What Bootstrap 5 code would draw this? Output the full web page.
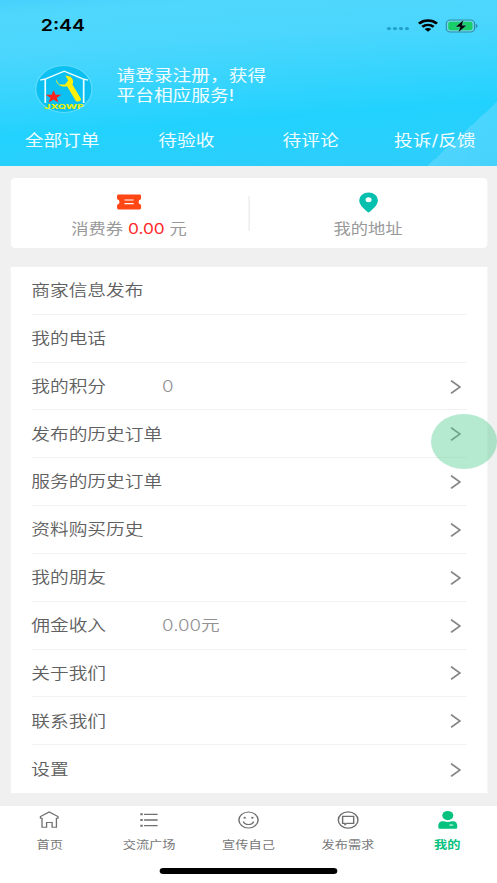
<!DOCTYPE html>
<html lang="zh-CN">
<head>
<meta charset="utf-8">
<meta name="viewport" content="width=device-width, initial-scale=1">
<title>我的</title>
<link href="https://cdn.jsdelivr.net/npm/bootstrap@5.3.0/dist/css/bootstrap.min.css" rel="stylesheet">
<style>
html,body{margin:0;overflow:hidden;background:#f0f0f0}
body{font-family:Inter,"Noto Sans CJK SC",sans-serif;color:#606060;width:497px;height:883px}
svg{display:block}
/* 414pt wide screen stretched to the window */
.screen{width:414px;height:883px;transform:scaleX(1.2005);transform-origin:0 0}
.hero{height:166px;color:#f0fcff;font-size:15.6px;
 background:linear-gradient(to bottom right,transparent 0 50%,rgba(120,220,255,.45) 50%,rgba(120,220,255,.3)) right bottom/58px 64px no-repeat,
 linear-gradient(175deg,#46d0fb 0%,#50d7fd 8%,#4cd6fd 26%,#37d4fd 48%,#22d2fe 68%,#30cdfb 100%)}
.status{height:51px;padding:0 16.5px 0 34px}
.clock{font-size:16.2px;font-weight:600;color:#000}
.wifi{margin:0 6px 0 7px}
.dots{margin-top:4px}
.profile{height:64px;padding:11px 0 0 28px}
.greet{line-height:20.5px;margin-left:18px;padding-bottom:5px}
.orders{height:52px}
.summary{margin:12px 8.5px 0;height:70px;border-radius:4px;color:#999;font-size:14.4px}
.bar-line{width:1px;height:35px;background:#e8e8e8}
.caption{margin:4px 0 -4px}
.red{color:#ff2a2a}
.menu{margin:19px 8.5px 0;padding:0 17px 0 17.5px;font-size:15.6px;font-weight:350}
.item{height:47.82px;border-bottom:1px solid #f2f2f2;padding-top:1px}
.item:last-child{border-bottom:0}
.item .name{width:109px}
.val{color:#929292;padding-top:1px}
.item svg{margin-right:5px}
.tabs{margin-top:13px;height:77px;font-size:11px;color:#777}
.tab-cell{padding-top:3px}
.tab-cell svg{height:22px;margin-bottom:6.5px}
.tab-cell.on{color:#07c17e;font-weight:600}
.homebar{left:133.3px;bottom:9px;width:147.5px;height:6px;border-radius:3px;background:#000}
.touch{left:358.6px;top:414px;width:55px;height:55px;border-radius:50%;background:rgba(84,206,148,.43)}
</style>
<script src="https://cdn.jsdelivr.net/npm/bootstrap@5.3.0/dist/js/bootstrap.bundle.min.js"></script>
</head>
<body>
<div class="screen position-relative">
 <header class="hero">
  <div class="status d-flex align-items-center justify-content-between">
   <span class="clock">2:44</span>
   <div class="d-flex align-items-center">
    <svg class="dots" width="19" height="6" fill="#229fc7"><circle cx="2" cy="3.6" r="1.7"/><circle cx="7" cy="3.6" r="1.7"/><circle cx="12" cy="3.6" r="1.7"/><circle cx="17" cy="3.6" r="1.7"/></svg>
    <svg class="wifi" width="17" height="13" viewBox="0 0 17 13" fill="none" stroke="#000" stroke-width="2.4"><path d="M1 4.6C5.2.5 11.8.5 16 4.6M3.8 7.8C6.5 5.2 10.5 5.2 13.2 7.8"/><path d="M8.5 12.8 5.7 10C7.3 8.5 9.7 8.5 11.3 10z" fill="#000" stroke="none"/></svg>
    <svg width="27" height="14" viewBox="0 0 27 14"><rect x=".7" y="1" width="23.6" height="12" rx="3.5" fill="#6ed5e9" stroke="#2c8caa"/><rect x="2.4" y="2.7" width="20.2" height="8.6" rx="2" fill="#17ce67"/><path d="M25.3 5v4c2-.8 2-3.2 0-4z" fill="#2c8caa"/><path d="M15.2.7 8.2 8h4l-1.5 5.5 7.3-7.3h-4z" fill="#000" stroke="#5cd9c8" stroke-width=".5"/></svg>
   </div>
  </div>
  <div class="profile d-flex align-items-center">
   <svg width="51" height="50" viewBox="0 0 51 50">
    <circle cx="25.2" cy="25" r="23.4" fill="#0cc0f2" stroke="#5ddcfd"/>
    <path d="M5.5 16.2 10 14.8 25.5 7.2 41 14.8l4.3 1.4M9.7 15v24M41.7 15v24" fill="none" stroke="#eaffff" stroke-width="1.4"/>
    <path d="M18.6 15.2c.2 5 4.5 8.6 9.3 7l7.2 14.5c.9 2 5.2.4 4.2-2.1l-7-14.2c2.1-4.5-1.3-9.2-5.8-8.6l2.3 4.7-2.7 4.1-5-.2z" fill="#fff10a"/>
    <path d="m16.6 26.2 1.7 4.5h5l-4 3 1.4 4.7-4.1-2.8-4.1 2.8 1.5-4.7-4-3h5z" fill="#ff231c"/>
    <text x="8.8" y="45.3" textLength="33" lengthAdjust="spacingAndGlyphs" font-size="6.8" font-weight="800" fill="#e3ef0c">JXQWP</text>
   </svg>
   <div class="greet">请登录注册，获得<br>平台相应服务!</div>
  </div>
  <div class="orders row g-0 align-items-center text-center text-nowrap">
   <div class="col">全部订单</div><div class="col">待验收</div><div class="col">待评论</div><div class="col">投诉/反馈</div>
  </div>
 </header>

 <section class="summary bg-white d-flex align-items-center">
  <div class="flex-fill w-50 d-flex flex-column align-items-center">
   <svg width="26" height="24" viewBox="0 0 26 24"><path d="M3.8 4.5h17.4q1.3 0 1.3 1.3v3.1a3.2 3.2 0 0 0 0 6v3.2q0 1.3-1.3 1.3H3.8q-1.3 0-1.3-1.3v-3.2a3.2 3.2 0 0 0 0-6V5.8q0-1.3 1.3-1.3z" fill="#ff4715"/><path d="M8.7 10h7.6M8.7 13.6h7.6" stroke="#fff" stroke-width="1.1"/></svg>
   <div class="caption lh-base">消费券 <span class="red">0.00</span> 元</div>
  </div>
  <div class="bar-line"></div>
  <div class="flex-fill w-50 d-flex flex-column align-items-center">
   <svg width="18" height="24" viewBox="0 0 18 24"><path d="M9 22.6C6.5 20.3 1.2 15.5 1.2 10.2a7.8 7.8 0 0 1 15.6 0C16.8 15.5 11.5 20.3 9 22.6z" fill="#05c0ae"/><circle cx="9" cy="9.8" r="2.5" fill="#fff"/></svg>
   <div class="caption lh-base">我的地址</div>
  </div>
 </section>

 <section class="menu bg-white">
  <div class="item d-flex align-items-center">商家信息发布</div>
  <div class="item d-flex align-items-center">我的电话</div>
  <div class="item d-flex align-items-center"><span class="name">我的积分</span><span class="val">0</span><svg class="ms-auto" width="9" height="14" fill="none" stroke="#858585" stroke-width="1.6"><path d="m.7.7 7.3 6.3-7.3 6.3"/></svg></div>
  <div class="item d-flex align-items-center">发布的历史订单<svg class="ms-auto" width="9" height="14" fill="none" stroke="#858585" stroke-width="1.6"><path d="m.7.7 7.3 6.3-7.3 6.3"/></svg></div>
  <div class="item d-flex align-items-center">服务的历史订单<svg class="ms-auto" width="9" height="14" fill="none" stroke="#858585" stroke-width="1.6"><path d="m.7.7 7.3 6.3-7.3 6.3"/></svg></div>
  <div class="item d-flex align-items-center">资料购买历史<svg class="ms-auto" width="9" height="14" fill="none" stroke="#858585" stroke-width="1.6"><path d="m.7.7 7.3 6.3-7.3 6.3"/></svg></div>
  <div class="item d-flex align-items-center">我的朋友<svg class="ms-auto" width="9" height="14" fill="none" stroke="#858585" stroke-width="1.6"><path d="m.7.7 7.3 6.3-7.3 6.3"/></svg></div>
  <div class="item d-flex align-items-center"><span class="name">佣金收入</span><span class="val">0.00元</span><svg class="ms-auto" width="9" height="14" fill="none" stroke="#858585" stroke-width="1.6"><path d="m.7.7 7.3 6.3-7.3 6.3"/></svg></div>
  <div class="item d-flex align-items-center">关于我们<svg class="ms-auto" width="9" height="14" fill="none" stroke="#858585" stroke-width="1.6"><path d="m.7.7 7.3 6.3-7.3 6.3"/></svg></div>
  <div class="item d-flex align-items-center">联系我们<svg class="ms-auto" width="9" height="14" fill="none" stroke="#858585" stroke-width="1.6"><path d="m.7.7 7.3 6.3-7.3 6.3"/></svg></div>
  <div class="item d-flex align-items-center">设置<svg class="ms-auto" width="9" height="14" fill="none" stroke="#858585" stroke-width="1.6"><path d="m.7.7 7.3 6.3-7.3 6.3"/></svg></div>
 </section>

 <nav class="tabs bg-white row g-0 text-center text-nowrap">
  <div class="tab-cell col d-flex flex-column align-items-center"><svg width="22" viewBox="0 0 22 22" fill="none" stroke="#707070" stroke-width="1.1"><path d="M3.7 9.2V7.6L11 3l7.3 4.6v1.6H17v9h-3.6v-4.7H8.8v4.7H5v-9z"/></svg>首页</div>
  <div class="tab-cell col d-flex flex-column align-items-center"><svg width="22" viewBox="0 0 22 22" fill="none" stroke="#707070"><path d="M7 5.3h11.3M7 11h11.3M7 16.7h11.3" stroke-width="1.3"/><path d="M3.9 5.3h2M3.9 11h2M3.9 16.7h2" stroke-width="2"/></svg>交流广场</div>
  <div class="tab-cell col d-flex flex-column align-items-center"><svg width="22" viewBox="0 0 22 22" fill="none" stroke="#707070" stroke-width="1.2"><circle cx="11" cy="11" r="8"/><path d="M6.7 12.5c1.3 4 7.3 4 8.6 0"/><g fill="#707070" stroke="none"><circle cx="7.8" cy="8.8" r="1"/><circle cx="14.2" cy="8.8" r="1"/></g></svg>宣传自己</div>
  <div class="tab-cell col d-flex flex-column align-items-center"><svg width="22" viewBox="0 0 22 22" fill="none" stroke="#707070" stroke-width="1.2"><circle cx="11" cy="11" r="8.2"/><path d="M6.4 7.3h9.2v7.1H10l-1.6 1.3-.2-1.3H6.4z"/></svg>发布需求</div>
  <div class="tab-cell col d-flex flex-column align-items-center on"><svg width="22" viewBox="0 0 22 22" fill="#07c17e"><circle cx="11" cy="6.6" r="4.6"/><path d="M6.5 12.2h1.4c2 .9 4.2.9 6.2 0h1.4c2.1 0 3.4 2 3.4 4.4v1.8q0 1.4-1.4 1.4h-13q-1.4 0-1.4-1.4v-1.8c0-2.4 1.3-4.4 3.4-4.4z"/><path d="M12.8 16h2.2" stroke="#fff" stroke-width="1.2" stroke-linecap="round"/></svg>我的</div>
 </nav>
 <div class="homebar position-absolute"></div>
 <div class="touch position-absolute"></div>
</div>
</body>
</html>
